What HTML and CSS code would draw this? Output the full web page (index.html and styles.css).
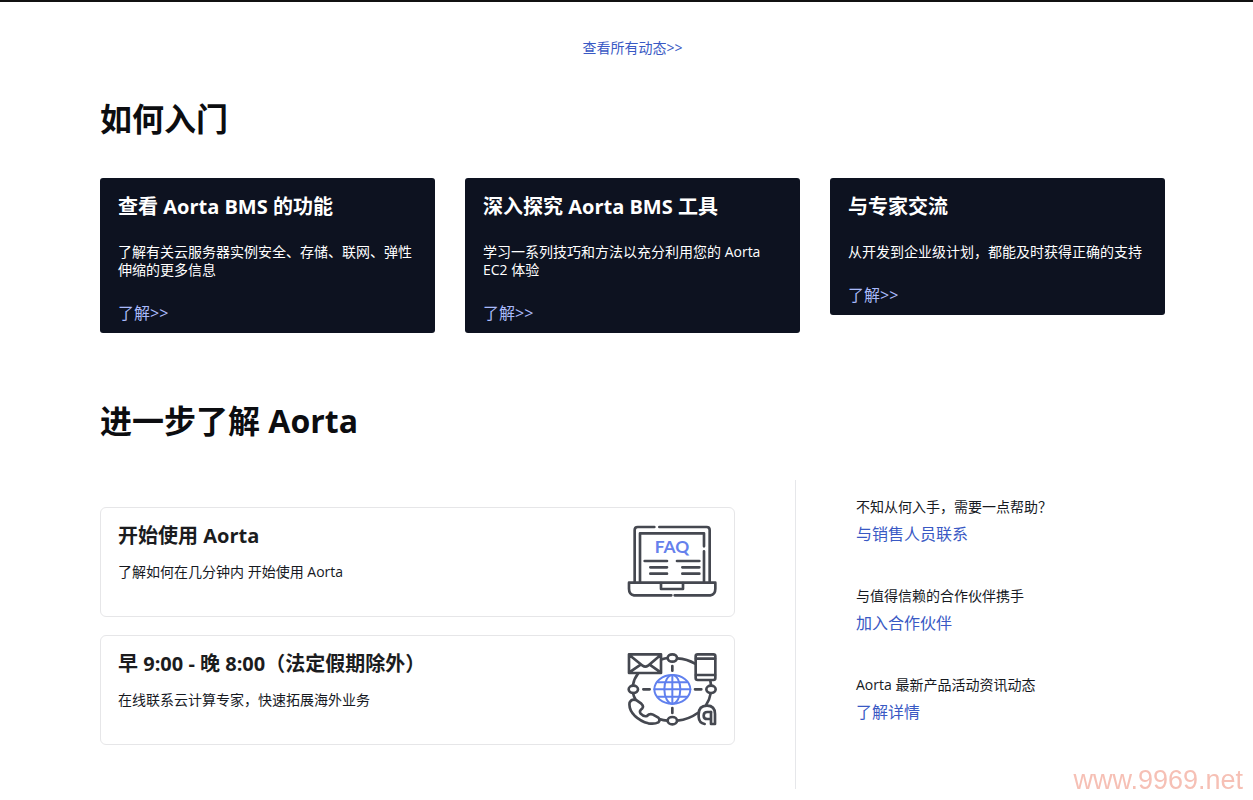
FILE: index.html
```html
<!DOCTYPE html>
<html lang="zh-CN">
<head>
<meta charset="utf-8">
<meta name="viewport" content="width=device-width, initial-scale=1">
<title>Aorta</title>
<link rel="stylesheet" href="styles.css">
</head>
<body>
<main class="page">
  <p class="all-news"><a class="link" href="#">查看所有动态&gt;&gt;</a></p>

  <section class="start">
    <h2 class="section-title">如何入门</h2>
    <div class="tiles">
      <article class="tile">
        <h3 class="tile-title">查看 Aorta BMS 的功能</h3>
        <p class="tile-text">了解有关云服务器实例安全、存储、联网、弹性伸缩的更多信息</p>
        <a class="tile-link" href="#">了解&gt;&gt;</a>
      </article>
      <article class="tile">
        <h3 class="tile-title">深入探究 Aorta BMS 工具</h3>
        <p class="tile-text">学习一系列技巧和方法以充分利用您的 Aorta EC2 体验</p>
        <a class="tile-link" href="#">了解&gt;&gt;</a>
      </article>
      <article class="tile">
        <h3 class="tile-title">与专家交流</h3>
        <p class="tile-text">从开发到企业级计划，都能及时获得正确的支持</p>
        <a class="tile-link" href="#">了解&gt;&gt;</a>
      </article>
    </div>
  </section>

  <section class="more">
    <h2 class="section-title">进一步了解 Aorta</h2>
    <div class="columns">
      <div class="cards">
        <article class="card">
          <div class="card-body">
            <h3 class="card-title">开始使用 Aorta</h3>
            <p class="card-text">了解如何在几分钟内 开始使用 Aorta</p>
          </div>
          <svg class="card-icon" viewBox="51 57 270 222" aria-hidden="true">
            <g class="ink">
              <path d="M74 230V75q0-9 9-9H133M148 66H290q9 0 9 9V230"/>
              <path d="M90 230V85H282V124M282 139V230"/>
              <path d="M184 271H72q-15-3-15-20V233H316V251q0 17-15 20H194"/>
              <path d="M153 234V252H219V234"/>
              <path d="M104 168H171M121 187H171M121 206H171M201 168H268M217 187H268M217 206H268"/>
            </g>
            <text class="faq" x="186" y="143" text-anchor="middle">FAQ</text>
          </svg>
        </article>
        <article class="card">
          <div class="card-body">
            <h3 class="card-title">早 9:00 - 晚 8:00（法定假期除外）</h3>
            <p class="card-text">在线联系云计算专家，快速拓展海外业务</p>
          </div>
          <svg class="card-icon" viewBox="51 51 270 222" aria-hidden="true">
            <g class="ink">
              <path d="M57 58H153V114H57ZM58 60L98 92Q106 98 114 92L152 60M58 112L92 89M152 112L119 89"/>
              <path d="M156 73Q164 70 173 69M202 70Q232 72 255 86M84 116Q72 131 69 150M69 174Q71 184 76 192M301 137L303 150M302 175Q299 195 287 212M148 252Q160 256 172 257M202 257Q237 253 263 234"/>
              <ellipse cx="187" cy="69" rx="14" ry="11"/>
              <ellipse cx="70" cy="163" rx="14" ry="11"/>
              <ellipse cx="303" cy="163" rx="14" ry="11"/>
              <ellipse cx="187" cy="257" rx="14" ry="11"/>
              <path d="M187 93V107M187 219V234M100 163H119M255 163H274"/>
              <rect x="257" y="58" width="59" height="77" rx="6"/>
              <path d="M258 71H315M258 120H315"/>
              <path d="M59 202Q66 190 80 196L94 206Q102 213 97 220Q86 228 92 236Q101 246 111 243Q119 234 129 239L145 248Q152 255 145 262Q134 268 115 265Q92 259 74 242Q55 222 59 202Z"/>
              <path d="M315 267H303V231M315 267V237Q315 212 291 212Q266 212 266 238V246Q267 264 284 267"/>
              <path d="M303 231H292Q281 231 281 242Q281 252 292 252H301"/>
            </g>
            <g class="globe">
              <ellipse cx="187" cy="163" rx="54" ry="43"/>
              <ellipse cx="187" cy="163" rx="24" ry="43"/>
              <path d="M187 120V206M133 163H241M144 142H230M144 185H230"/>
            </g>
          </svg>
        </article>
      </div>
      <aside class="contacts">
        <div class="contact">
          <p class="contact-text">不知从何入手，需要一点帮助？</p>
          <a class="link contact-link" href="#">与销售人员联系</a>
        </div>
        <div class="contact">
          <p class="contact-text">与值得信赖的合作伙伴携手</p>
          <a class="link contact-link" href="#">加入合作伙伴</a>
        </div>
        <div class="contact">
          <p class="contact-text">Aorta 最新产品活动资讯动态</p>
          <a class="link contact-link" href="#">了解详情</a>
        </div>
      </aside>
    </div>
  </section>
</main>
<div class="watermark">www.9969.net</div>
</body>
</html>
```
FILE: styles.css
```css
* {
  box-sizing: border-box;
}

body {
  margin: 0;
  border-top: 2px solid #111;
  background: #fff;
  color: #16191f;
  font: 14px/18px "Open Sans", "Noto Sans CJK SC", sans-serif;
}

h2, h3, p {
  margin: 0;
}

a {
  text-decoration: none;
}

.page {
  padding: 37px 88px 10px 100px;
}

.link {
  color: #3959c4;
}

.all-news {
  text-align: center;
}

.section-title {
  color: #0c0d10;
  font-size: 32px;
  line-height: 40px;
  font-weight: 700;
}

.start {
  padding-top: 42px;
}

.tiles {
  display: grid;
  grid-template-columns: repeat(3, 1fr);
  align-items: start;
  gap: 30px;
  margin-top: 39px;
}

.tile {
  padding: 16px 18px 10px;
  border-radius: 3px;
  background: #0d1220;
  color: #fff;
}

.tile-title {
  font-size: 20px;
  line-height: 26px;
}

.tile-text {
  margin: 23px 0 24px;
}

.tile-link {
  display: block;
  color: #a9bafa;
  font-size: 16px;
  line-height: 20px;
}

.more {
  padding-top: 68px;
}

.columns {
  display: grid;
  grid-template-columns: 696fr 369fr;
  margin-top: 39px;
}

.cards {
  display: flex;
  flex-direction: column;
  gap: 18px;
  padding: 27px 60px 44px 0;
  border-right: 1px solid #e6e7ea;
}

.card {
  display: flex;
  justify-content: space-between;
  gap: 16px;
  padding: 16px 17px 18px;
  border: 1px solid #e6e6e8;
  border-radius: 6px;
}

.card-title {
  color: #1b1c1e;
  font-size: 20px;
  line-height: 24px;
}

.card-text {
  margin-top: 14px;
  line-height: 20px;
}

.card-icon {
  flex: none;
  width: 90px;
  height: 74px;
}

.ink,
.globe {
  fill: none;
  stroke: #454850;
  stroke-width: 8;
  stroke-linecap: round;
  stroke-linejoin: round;
}

.globe {
  stroke: #6080ee;
  stroke-width: 6;
}

.faq {
  fill: #6581ec;
  font: 700 52px "Lato", sans-serif;
}

.contacts {
  display: flex;
  flex-direction: column;
  gap: 42px;
  padding: 17px 0 0 60px;
}

.contact-link {
  display: block;
  margin-top: 8px;
  font-size: 16px;
  line-height: 20px;
}

.contact-text {
  line-height: 19px;
}

.watermark {
  position: fixed;
  right: 10px;
  bottom: 4px;
  color: #f6c0b5;
  font: 27px/32px "Liberation Sans", Arial, sans-serif;
}
```
